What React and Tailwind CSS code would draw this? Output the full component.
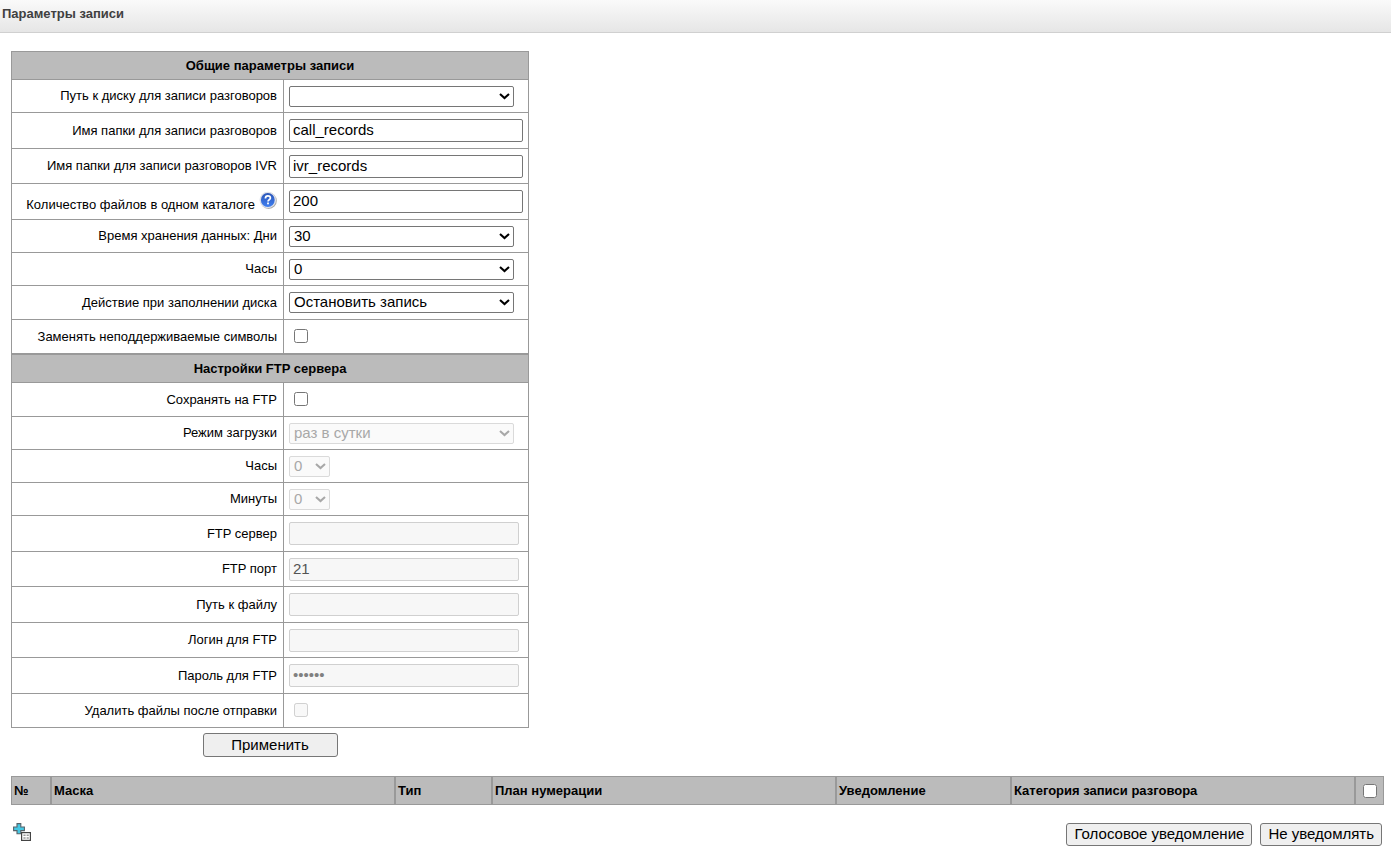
import React, { useState } from "react";

const generalRows = [
  { id: "disk", label: "Путь к диску для записи разговоров", type: "select", options: [""], height: "h-[33px]" },
  { id: "folder", label: "Имя папки для записи разговоров", type: "text", value: "call_records", height: "h-[36px]" },
  { id: "ivr", label: "Имя папки для записи разговоров IVR", type: "text", value: "ivr_records", height: "h-[35px]" },
  { id: "count", label: "Количество файлов в одном каталоге", type: "text", value: "200", help: true, height: "h-[36px]" },
  { id: "days", label: "Время хранения данных: Дни", type: "select", options: ["30"], height: "h-[33px]" },
  { id: "hours", label: "Часы", type: "select", options: ["0"], height: "h-[33px]" },
  { id: "full", label: "Действие при заполнении диска", type: "select", options: ["Остановить запись"], height: "h-[34px]" },
  { id: "replace", label: "Заменять неподдерживаемые символы", type: "checkbox", height: "h-[34px]" },
];

const ftpRows = [
  { id: "mode", label: "Режим загрузки", type: "select", options: ["раз в сутки"], height: "h-[33px]" },
  { id: "ftp-hours", label: "Часы", type: "select", options: ["0"], small: true, height: "h-[33px]" },
  { id: "ftp-minutes", label: "Минуты", type: "select", options: ["0"], small: true, height: "h-[33px]" },
  { id: "server", label: "FTP сервер", type: "text", value: "", height: "h-[36px]" },
  { id: "port", label: "FTP порт", type: "text", value: "21", height: "h-[35px]" },
  { id: "path", label: "Путь к файлу", type: "text", value: "", height: "h-[36px]" },
  { id: "login", label: "Логин для FTP", type: "text", value: "", height: "h-[35px]" },
  { id: "password", label: "Пароль для FTP", type: "password", value: "secret", height: "h-[36px]" },
  { id: "remove", label: "Удалить файлы после отправки", type: "checkbox", height: "h-[34px]" },
];

const columns = [
  { title: "№", width: "w-[40px]" },
  { title: "Маска", width: "" },
  { title: "Тип", width: "w-[97px]" },
  { title: "План нумерации", width: "" },
  { title: "Уведомление", width: "w-[175px]" },
  { title: "Категория записи разговора", width: "" },
];

const HelpIcon = () => (
  <svg className="inline-block size-[18px] ml-1 align-baseline" viewBox="0 0 18 18">
    <defs>
      <linearGradient id="help-blue" x1="0" y1="0" x2="0" y2="1">
        <stop offset="0" stopColor="#2a55b8" />
        <stop offset="1" stopColor="#3f7ff0" />
      </linearGradient>
    </defs>
    <circle cx="9.6" cy="9.8" r="8.2" fill="#a9a9a9" />
    <circle cx="8.8" cy="9" r="8.3" fill="#dfe2ea" />
    <circle cx="8.8" cy="9" r="6.9" fill="url(#help-blue)" />
    <path
      d="M6.4 7.4c0-1.7 1-2.6 2.5-2.6s2.5.9 2.5 2.2c0 1.7-2.4 1.7-2.4 3.4"
      fill="none"
      stroke="#fff"
      strokeWidth="1.7"
    />
    <rect x="8.1" y="11.5" width="1.8" height="1.8" fill="#fff" />
  </svg>
);

const AddIcon = () => (
  <svg className="block size-[18px]" viewBox="0 0 18 18">
    <path
      d="M4 .6h3.8V4h3.6v3.6H7.8v3.2H4V7.6H.6V4H4z"
      fill="#45c8e4"
      stroke="#56636a"
      strokeWidth="1.1"
    />
    <rect x="8.6" y="9.6" width="8.8" height="7.8" fill="#fff" stroke="#444" strokeWidth="1.2" />
    <path d="M10.4 12.3h2.2m1 0h2.2m-5.4 2.6h2.2m1 0h2.2" stroke="#999" strokeWidth="1.5" />
  </svg>
);

const Field = ({ row, disabled }) => {
  const [value, setValue] = useState(row.value ?? "");

  if (row.type === "select") {
    return (
      <div className={`relative ${row.small ? "w-[41px]" : "w-[225px]"}`}>
        <select
          id={row.id}
          disabled={disabled}
          className="block h-[21px] w-full appearance-none rounded-xs border border-[#767676] bg-white pb-px pl-1 text-[15px] leading-[18px] text-black disabled:border-[#dadada] disabled:bg-[#fafafa] disabled:text-[#a8a8a8] disabled:opacity-100"
        >
          {row.options.map((option) => (
            <option key={option}>{option}</option>
          ))}
        </select>
        <svg
          className={`pointer-events-none absolute top-[7px] right-1 h-[7px] w-[11px] ${
            disabled ? "text-[#a8a8a8]" : "text-black"
          }`}
          viewBox="0 0 11 7"
        >
          <path d="M1 1l4.5 4L10 1" fill="none" stroke="currentColor" strokeWidth="2.1" />
        </svg>
      </div>
    );
  }

  if (row.type === "checkbox") {
    return (
      <input id={row.id} type="checkbox" disabled={disabled} className="mb-0.5 ml-[5px] block size-[14px]" />
    );
  }

  return (
    <input
      id={row.id}
      type={row.type}
      value={value}
      onChange={(e) => setValue(e.target.value)}
      disabled={disabled}
      className={`block h-[23px] rounded-xs border border-[#767676] bg-white px-[3px] pb-0.5 text-[15px] text-black disabled:border-[#d0d0d0] disabled:bg-[#f7f7f7] ${
        row.type === "password" ? "disabled:text-[#808080]" : "disabled:text-[#545454]"
      } ${disabled ? "w-[230px]" : "w-[234px]"}`}
    />
  );
};

const SettingsTable = ({ title, children }) => (
  <table className="w-[518px] table-fixed border-collapse">
    <colgroup>
      <col className="w-[272px]" />
      <col />
    </colgroup>
    <thead>
      <tr className="h-[28px]">
        <th colSpan={2} className="border border-[#999] bg-[#bbb] p-0 text-center font-bold">
          {title}
        </th>
      </tr>
    </thead>
    <tbody>{children}</tbody>
  </table>
);

const SettingsRow = ({ row, disabled }) => (
  <tr className={row.height}>
    <td className="border border-[#999] p-0 pr-1.5 text-right whitespace-nowrap">
      <label htmlFor={row.id}>{row.label}</label>
      {row.help && <HelpIcon />}
    </td>
    <td className="border border-[#999] p-0 pl-[5px]">
      <Field row={row} disabled={disabled} />
    </td>
  </tr>
);

const Button = ({ className = "", children }) => (
  <button
    type="button"
    className={`rounded-[3px] border border-[#767676] bg-[#efefef] px-[7px] pb-px text-[15px] leading-5 text-black ${className}`}
  >
    {children}
  </button>
);

const App = () => {
  return (
    <div className="font-['Liberation_Sans',Arial,sans-serif] text-[13px] leading-4 text-black">
      <header className="h-[33px] border-b border-[#d0d0d0] bg-linear-to-b from-[#fafafa] to-[#e6e6e6] pt-1.5 pl-0.5">
        <h1 className="font-bold text-[#404040]">Параметры записи</h1>
      </header>

      <main className="pt-[18px] pr-[7px] pl-[11px]">
        <form className="w-[518px]">
          <SettingsTable title="Общие параметры записи">
            {generalRows.map((row) => (
              <SettingsRow key={row.id} row={row} />
            ))}
          </SettingsTable>
          <SettingsTable title="Настройки FTP сервера">
            <SettingsRow row={{ id: "ftp", label: "Сохранять на FTP", type: "checkbox", height: "h-[34px]" }} />
            {ftpRows.map((row) => (
              <SettingsRow key={row.id} row={row} disabled />
            ))}
          </SettingsTable>
          <div className="flex justify-center pt-[5px]">
            <Button className="h-6 w-[135px]">Применить</Button>
          </div>
        </form>

        <table className="mt-[19px] w-full table-fixed border-separate border-spacing-0">
          <thead>
            <tr className="h-[29px]">
              {columns.map((column) => (
                <th
                  key={column.title}
                  className={`border border-[#999] bg-[#bbb] px-0.5 py-0 text-left font-bold whitespace-nowrap ${column.width}`}
                >
                  {column.title}
                </th>
              ))}
              <th className="w-[29px] border border-[#999] bg-[#bbb] p-0">
                <input type="checkbox" aria-label="Выбрать все" className="mx-auto block size-[14px]" />
              </th>
            </tr>
          </thead>
        </table>

        <div className="flex items-start justify-between pt-[18px] pr-0.5 pl-0.5">
          <button type="button" aria-label="Добавить">
            <AddIcon />
          </button>
          <div className="flex gap-2">
            <Button>Голосовое уведомление</Button>
            <Button>Не уведомлять</Button>
          </div>
        </div>
      </main>
    </div>
  );
};

export default App;
